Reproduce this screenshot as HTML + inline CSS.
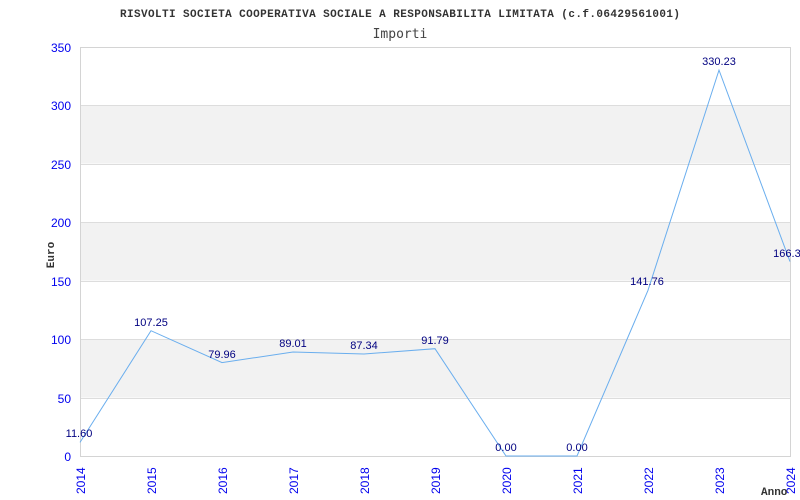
<!DOCTYPE html>
<html><head><style>body{margin:0;background:#fff}svg{display:block}</style></head><body>
<svg width="800" height="500" xmlns="http://www.w3.org/2000/svg">
<rect width="800" height="500" fill="#fff"/>
<text x="120" y="17" textLength="560" lengthAdjust="spacing" font-family="Liberation Mono, monospace" font-weight="bold" font-size="11" fill="#333">RISVOLTI SOCIETA COOPERATIVA SOCIALE A RESPONSABILITA LIMITATA (c.f.06429561001)</text>
<text x="400" y="38" text-anchor="middle" font-family="DejaVu Sans Mono, monospace" font-size="13" fill="#444">Importi</text>
<g fill="#f2f2f2">
<rect x="80" y="105" width="710" height="58.5"/>
<rect x="80" y="222" width="710" height="58.5"/>
<rect x="80" y="339" width="710" height="58.5"/>
</g>
<g stroke="#ddd" stroke-width="1">
<line x1="80" y1="105.5" x2="790" y2="105.5"/><line x1="80" y1="164.5" x2="790" y2="164.5"/>
<line x1="80" y1="222.5" x2="790" y2="222.5"/><line x1="80" y1="281.5" x2="790" y2="281.5"/>
<line x1="80" y1="339.5" x2="790" y2="339.5"/><line x1="80" y1="398.5" x2="790" y2="398.5"/>
</g>
<rect x="80.5" y="47.5" width="710" height="409" fill="none" stroke="#d4d4d4"/>
<g font-family="Liberation Sans, sans-serif" font-size="12" fill="#0000ee" text-anchor="end">
<text x="71" y="52">350</text><text x="71" y="110">300</text><text x="71" y="169">250</text>
<text x="71" y="227">200</text><text x="71" y="286">150</text><text x="71" y="344">100</text>
<text x="71" y="403">50</text><text x="71" y="461">0</text>
</g>
<text transform="translate(54,255) rotate(-90)" text-anchor="middle" font-family="Liberation Mono, monospace" font-weight="bold" font-size="11" fill="#333">Euro</text>
<g font-family="Liberation Sans, sans-serif" font-size="12" fill="#0000ee">
<text transform="translate(85,494) rotate(-90)">2014</text>
<text transform="translate(156,494) rotate(-90)">2015</text>
<text transform="translate(227,494) rotate(-90)">2016</text>
<text transform="translate(298,494) rotate(-90)">2017</text>
<text transform="translate(369,494) rotate(-90)">2018</text>
<text transform="translate(440,494) rotate(-90)">2019</text>
<text transform="translate(511,494) rotate(-90)">2020</text>
<text transform="translate(582,494) rotate(-90)">2021</text>
<text transform="translate(653,494) rotate(-90)">2022</text>
<text transform="translate(724,494) rotate(-90)">2023</text>
<text transform="translate(795,494) rotate(-90)">2024</text>
</g>
<text x="761" y="495" font-family="Liberation Mono, monospace" font-weight="bold" font-size="11" fill="#333">Anno</text>
<polyline fill="none" stroke="#6aaeee" stroke-width="1" points="80,442.4 151,330.7 222,362.6 293,352 364,354 435,348.7 506,456 577,456 648,290.3 719,70.1 790,261.6"/>
<g font-family="Liberation Sans, sans-serif" font-size="11" fill="#000080" text-anchor="middle">
<text x="79" y="437">11.60</text><text x="151" y="326">107.25</text><text x="222" y="358">79.96</text>
<text x="293" y="347">89.01</text><text x="364" y="349">87.34</text><text x="435" y="344">91.79</text>
<text x="506" y="451">0.00</text><text x="577" y="451">0.00</text><text x="647" y="285">141.76</text>
<text x="719" y="65">330.23</text><text x="790" y="257">166.36</text>
</g>
</svg>
</body></html>
